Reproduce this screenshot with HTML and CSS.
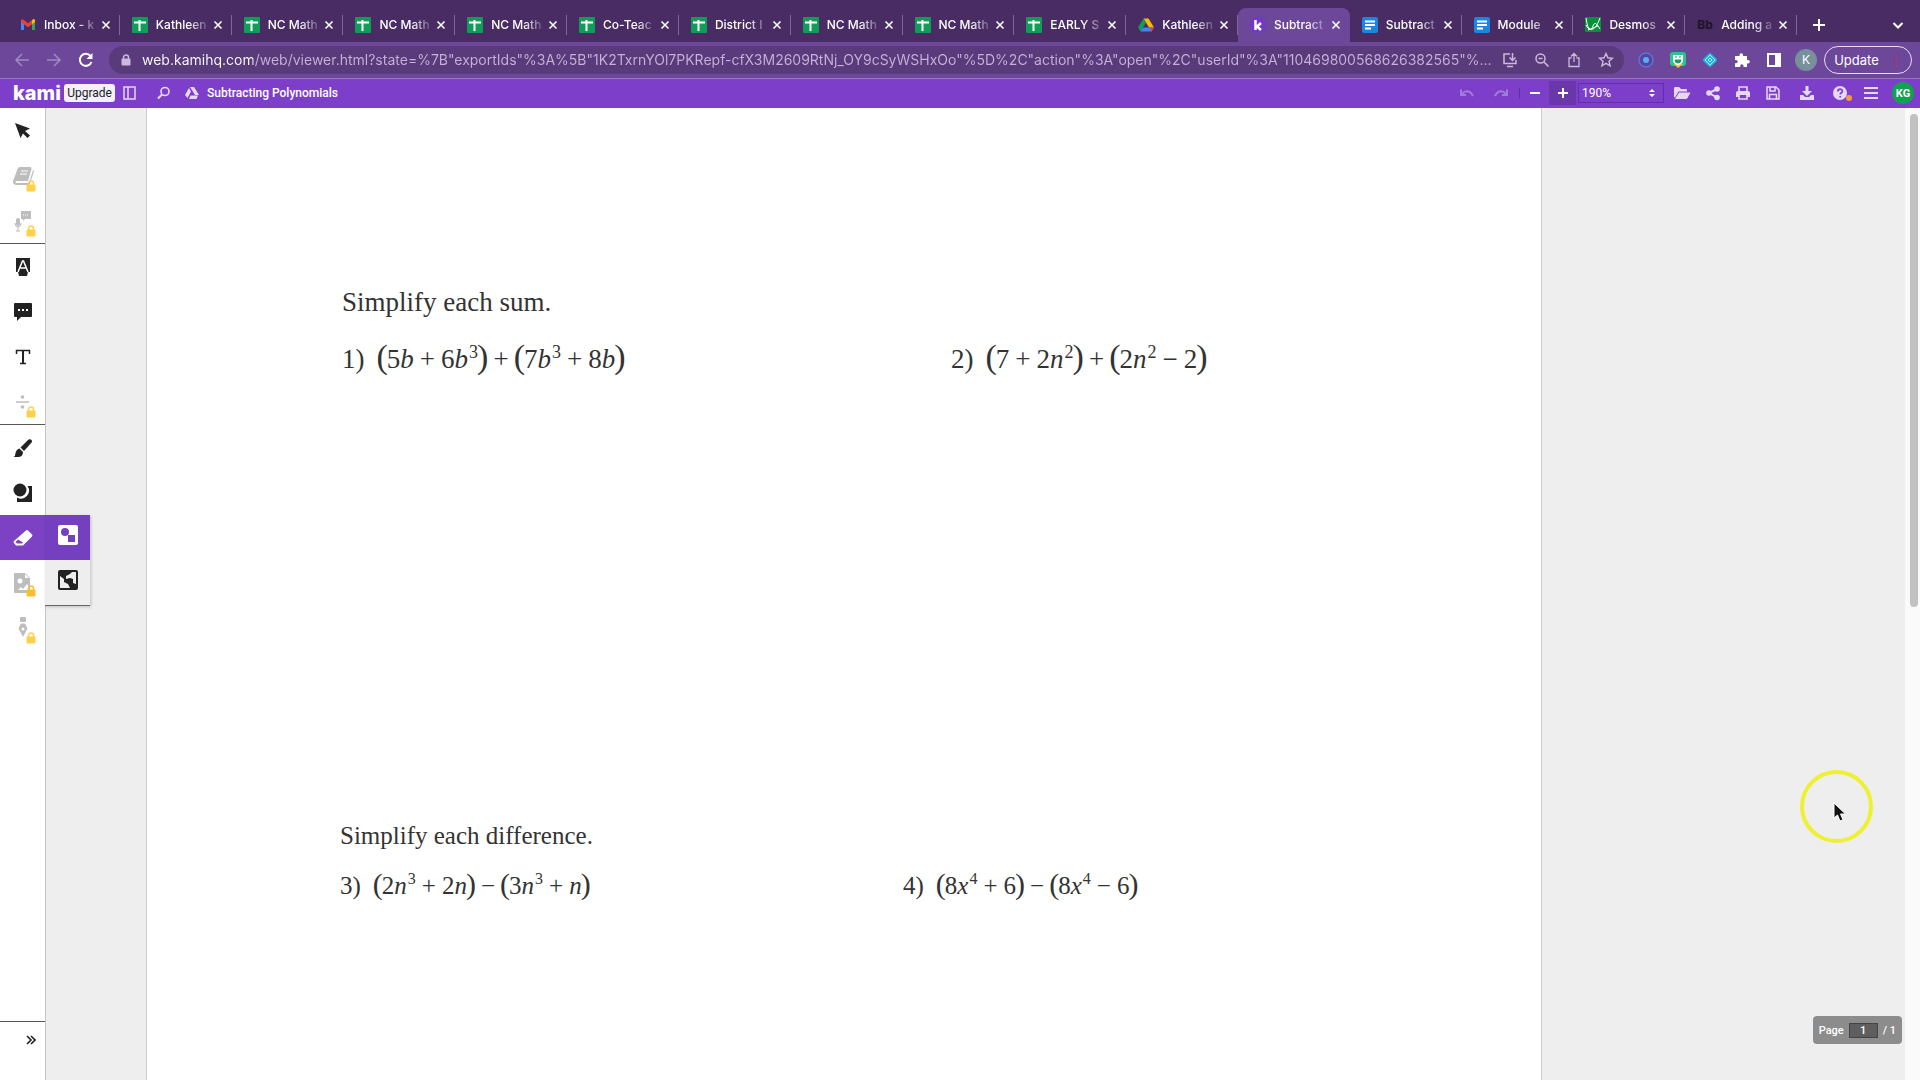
FILE: index.html
```html
<!DOCTYPE html>
<html lang="en">
<head>
    <meta charset="UTF-8">
    <meta name="viewport" content="width=device-width, initial-scale=1.0">
    <title>Subtracting Polynomials</title>
    <link rel="stylesheet" href="styles.css">
</head>
<body>
    <svg class="defs" aria-hidden="true">
        <symbol id="sheets" viewBox="0 0 16 16"><rect width="16" height="16" rx="1" fill="#0f9d58"/><path d="M2 5.500h12M7.500 3v11" stroke="#fff" stroke-width="2"/></symbol>
        <symbol id="docs" viewBox="0 0 16 16"><rect width="16" height="16" rx="2" fill="#1a86e0"/><path d="M3 4.500h10M3 8h10M3 11.500h6" stroke="#fff" stroke-width="2"/></symbol>
        <symbol id="close" viewBox="0 0 10 10"><path d="M1.500 1.500l7 7M8.500 1.500l-7 7" stroke="#fff" stroke-width="1.600"/></symbol>
        <symbol id="lock" viewBox="0 0 10 12"><path d="M2.500 6V3.500a2.500 2.500 0 0 1 5 0V6" fill="none" stroke="currentColor" stroke-width="1.500"/><rect x="0.500" y="4.500" width="9" height="7" rx="1" fill="currentColor"/></symbol>
    </svg>

    <!-- Browser tabs -->
    <div class="tab-strip">
        <div class="tabs">
            <div class="tab"><svg class="favicon" viewBox="0 0 16 16"><path d="M1 13V4l3 2.300V13z" fill="#4285f4"/><path d="M12 13V6.300L15 4v9z" fill="#34a853"/><path d="M1 5V3.500C1 2 2.500 2 3.500 2.800L8 6.200l4.500-3.400C13.500 2 15 2 15 3.500V5L8 10.300z" fill="#ea4335"/><path d="M12 3.200l.8-.6C13.800 2 15 2.400 15 3.500V5l-3 2.300z" fill="#fbbc04"/></svg><a class="tab-title" href="#">Inbox - k</a><button class="tab-close" aria-label="Close"><svg><use href="#close"/></svg></button></div>
            <div class="tab"><svg class="favicon"><use href="#sheets"/></svg><a class="tab-title" href="#">Kathleen</a><button class="tab-close" aria-label="Close"><svg><use href="#close"/></svg></button></div>
            <div class="tab"><svg class="favicon"><use href="#sheets"/></svg><a class="tab-title" href="#">NC Math</a><button class="tab-close" aria-label="Close"><svg><use href="#close"/></svg></button></div>
            <div class="tab"><svg class="favicon"><use href="#sheets"/></svg><a class="tab-title" href="#">NC Math</a><button class="tab-close" aria-label="Close"><svg><use href="#close"/></svg></button></div>
            <div class="tab"><svg class="favicon"><use href="#sheets"/></svg><a class="tab-title" href="#">NC Math</a><button class="tab-close" aria-label="Close"><svg><use href="#close"/></svg></button></div>
            <div class="tab"><svg class="favicon"><use href="#sheets"/></svg><a class="tab-title" href="#">Co-Teac</a><button class="tab-close" aria-label="Close"><svg><use href="#close"/></svg></button></div>
            <div class="tab"><svg class="favicon"><use href="#sheets"/></svg><a class="tab-title" href="#">District I</a><button class="tab-close" aria-label="Close"><svg><use href="#close"/></svg></button></div>
            <div class="tab"><svg class="favicon"><use href="#sheets"/></svg><a class="tab-title" href="#">NC Math</a><button class="tab-close" aria-label="Close"><svg><use href="#close"/></svg></button></div>
            <div class="tab"><svg class="favicon"><use href="#sheets"/></svg><a class="tab-title" href="#">NC Math</a><button class="tab-close" aria-label="Close"><svg><use href="#close"/></svg></button></div>
            <div class="tab"><svg class="favicon"><use href="#sheets"/></svg><a class="tab-title" href="#">EARLY S</a><button class="tab-close" aria-label="Close"><svg><use href="#close"/></svg></button></div>
            <div class="tab"><svg class="favicon" viewBox="0 0 16 16"><path d="M5.500 1.500h5L16 10.500h-5z" fill="#fbbc04"/><path d="M5.500 1.500L0 10.500l2.500 4L8 5.500z" fill="#0f9d58"/><path d="M5 10.500h11l-2.500 4h-11z" fill="#4285f4"/><path d="M11.500 10.500H16l-2.500 4z" fill="#ea4335"/></svg><a class="tab-title" href="#">Kathleen</a><button class="tab-close" aria-label="Close"><svg><use href="#close"/></svg></button></div>
            <div class="tab active"><svg class="favicon" viewBox="0 0 16 16"><circle cx="8" cy="8" r="8" fill="#7238c8"/><path d="M5.500 3v10M11 6L7 9.500l4 3.500" stroke="#fff" stroke-width="2.500" fill="none"/></svg><a class="tab-title" href="#">Subtract</a><button class="tab-close" aria-label="Close"><svg><use href="#close"/></svg></button></div>
            <div class="tab"><svg class="favicon"><use href="#docs"/></svg><a class="tab-title" href="#">Subtract</a><button class="tab-close" aria-label="Close"><svg><use href="#close"/></svg></button></div>
            <div class="tab"><svg class="favicon"><use href="#docs"/></svg><a class="tab-title" href="#">Module</a><button class="tab-close" aria-label="Close"><svg><use href="#close"/></svg></button></div>
            <div class="tab"><svg class="favicon" viewBox="0 0 16 16"><rect width="16" height="15" rx="1" fill="#0b8f3a"/><path d="M1 1c2 14 5 13 7 8s4-2 7 3M1 8c3 7 9 7 14-7M3 13L13 9" stroke="#fff" fill="none"/></svg><a class="tab-title" href="#">Desmos</a><button class="tab-close" aria-label="Close"><svg><use href="#close"/></svg></button></div>
            <div class="tab"><span class="favicon bb">Bb</span><a class="tab-title" href="#">Adding a</a><button class="tab-close" aria-label="Close"><svg><use href="#close"/></svg></button></div>
        </div>
        <div class="tab-actions">
            <button aria-label="New tab"><svg width="12" height="12" viewBox="0 0 12 12"><path d="M6 0v12M0 6h12" stroke="#fff" stroke-width="2"/></svg></button>
            <button aria-label="Search tabs"><svg width="12" height="12" viewBox="0 0 12 12"><path d="M1.500 4L6 8.500 10.500 4" fill="none" stroke="#fff" stroke-width="2"/></svg></button>
        </div>
    </div>

    <!-- Address bar -->
    <div class="address-row">
        <div class="nav-buttons">
            <button class="dim" aria-label="Back"><svg width="16" height="16" viewBox="0 0 16 16"><path d="M15 8H2M8 2L2 8l6 6" fill="none" stroke="currentColor" stroke-width="1.500"/></svg></button>
            <button class="dim" aria-label="Forward"><svg width="16" height="16" viewBox="0 0 16 16"><path d="M1 8h13M8 2l6 6-6 6" fill="none" stroke="currentColor" stroke-width="1.500"/></svg></button>
            <button aria-label="Reload"><svg width="16" height="16" viewBox="0 0 16 16"><path d="M13.500 10A6 6 0 1 1 12.500 4" fill="none" stroke="currentColor" stroke-width="2"/><path d="M14.500 1v6h-6z" fill="currentColor"/></svg></button>
        </div>
        <div class="address">
            <svg class="secure" width="10" height="12"><use href="#lock"/></svg>
            <input class="url" type="text" aria-label="Address" value="web.kamihq.com/web/viewer.html?state=%7B&quot;exportIds&quot;%3A%5B&quot;1K2TxrnYOl7PKRepf-cfX3M2609RtNj_OY9cSyWSHxOo&quot;%5D%2C&quot;action&quot;%3A&quot;open&quot;%2C&quot;userId&quot;%3A&quot;110469800568626382565&quot;%...">
            <div class="address-icons">
                <button aria-label="Install"><svg width="16" height="16" viewBox="0 0 16 16"><path d="M8 2H2v9.500h12V8M5 14.500h6M10.500 1v7M7.500 5.500l3 3 3-3" fill="none" stroke="currentColor" stroke-width="1.500"/></svg></button>
                <button aria-label="Zoom out"><svg width="16" height="16" viewBox="0 0 16 16"><circle cx="6.500" cy="6.500" r="4.500" fill="none" stroke="currentColor" stroke-width="1.500"/><path d="M10 10l4.500 4.500M4.500 6.500h4" stroke="currentColor" stroke-width="1.500"/></svg></button>
                <button aria-label="Share"><svg width="16" height="16" viewBox="0 0 16 16"><path d="M5.500 6H3v8.500h10V6h-2.500M8 10V1.500M5 4.500l3-3 3 3" fill="none" stroke="currentColor" stroke-width="1.300"/></svg></button>
                <button aria-label="Bookmark"><svg width="16" height="16" viewBox="0 0 16 16"><path d="M8 1.500l1.900 4.300 4.600.4-3.500 3 1.100 4.600L8 11.400l-4.100 2.400L5 9.200l-3.500-3 4.600-.4z" fill="none" stroke="currentColor" stroke-width="1.400"/></svg></button>
            </div>
        </div>
        <div class="extensions">
            <button aria-label="Recorder"><svg width="16" height="16" viewBox="0 0 16 16"><circle cx="8" cy="8" r="7" fill="#5942a3" stroke="#5c74cf" stroke-width="1.500"/><circle cx="8" cy="8" r="3" fill="#5aaef5"/></svg></button>
            <button aria-label="Bitmoji"><svg width="16" height="16" viewBox="0 0 16 16"><rect width="16" height="14" rx="3" fill="#2bc48a"/><path d="M4 12h9l-5 4z" fill="#f4c542"/><path d="M3 3h10v5a5 5 0 0 1-10 0z" fill="#fff"/><path d="M5 5h2M9 5h2M5 8h6a3 3 0 0 1-6 0z" stroke="#189b69" fill="#189b69"/></svg></button>
            <button aria-label="Diamond"><svg width="16" height="16" viewBox="0 0 16 16"><rect x="2.500" y="2.500" width="11" height="11" rx="2" transform="rotate(45 8 8)" fill="#23b5e8"/><path d="M8 3l5 5-5 5-5-5zM8 6l2 2-2 2-2-2z" fill="none" stroke="#a4e8fa"/></svg></button>
            <button aria-label="Extensions"><svg width="16" height="16" viewBox="0 0 16 16"><path d="M1 4h4.500V3a1.800 1.800 0 0 1 3.600 0v1H13v4h1a1.800 1.800 0 0 1 0 3.600h-1V15H9.500v-1.200a1.600 1.600 0 0 0-3.200 0V15H1v-3.700h1a1.700 1.700 0 0 0 0-3.400H1z" fill="#fff"/></svg></button>
            <button aria-label="Side panel"><svg width="16" height="16" viewBox="0 0 16 16"><path d="M1 1h14v14H1zM3 3v10h6V3z" fill="#fff" fill-rule="evenodd"/></svg></button>
            <button class="profile">K</button>
            <button class="update">Update <span class="dots">⋮</span></button>
        </div>
    </div>

    <!-- Kami toolbar -->
    <header class="kami-bar">
        <a class="logo" href="#">kami</a>
        <button class="upgrade">Upgrade</button>
        <button class="panel-toggle" aria-label="Panel"><svg width="14" height="14" viewBox="0 0 14 14"><path d="M1 1h11v12H1zM5 1v12" fill="none" stroke="currentColor" stroke-width="1.500"/></svg></button>
        <button class="search" aria-label="Search"><svg width="14" height="14" viewBox="0 0 14 14"><circle cx="8" cy="5.500" r="4" fill="none" stroke="currentColor" stroke-width="1.600"/><path d="M5 8.500L1 12.500" stroke="currentColor" stroke-width="2"/></svg></button>
        <svg class="drive" width="14" height="12" viewBox="0 0 14 12"><path d="M5 0h4l5 8h-4zM4 1l2 3.500L2.500 11 0 8zM5.500 8.500H13L11.500 12H4z" fill="currentColor"/></svg>
        <h1 class="doc-title">Subtracting Polynomials</h1>
        <div class="kami-tools">
            <div class="history">
                <button aria-label="Undo"><svg width="16" height="10" viewBox="0 0 16 10"><path d="M3 6c3-4 8-4 11 2M2 1.500V7h5" fill="none" stroke="currentColor" stroke-width="2"/></svg></button>
                <button aria-label="Redo"><svg width="16" height="10" viewBox="0 0 16 10"><path d="M13 6C10 2 5 2 2 8M14 1.500V7H9" fill="none" stroke="currentColor" stroke-width="2"/></svg></button>
            </div>
            <button class="zoom-out" aria-label="Zoom out"><svg width="10" height="10" viewBox="0 0 10 10"><path d="M0 5h10" stroke="#fff" stroke-width="2"/></svg></button>
            <button class="zoom-in" aria-label="Zoom in"><svg width="10" height="10" viewBox="0 0 10 10"><path d="M0 5h10M5 0v10" stroke="#fff" stroke-width="2"/></svg></button>
            <div class="zoom-level">
                <select aria-label="Zoom level"><option>190%</option></select>
                <svg width="6" height="8" viewBox="0 0 6 8"><path d="M0 3l3-3 3 3zM0 5l3 3 3-3z" fill="#fff"/></svg>
            </div>
            <div class="file-tools">
                <button aria-label="Open"><svg width="18" height="16" viewBox="0 0 18 16"><path d="M1 12V3q0-1 1-1h4l2 2h5q1 0 1 1v1.500H5.500L2 12.500z" fill="currentColor"/><path d="M6 7.500h11.500L14.500 13q-.5 1-1.500 1H2z" fill="currentColor"/></svg></button>
                <button aria-label="Share"><svg width="16" height="16" viewBox="0 0 16 16"><path d="M12 4L4 8l8 4.500" fill="none" stroke="currentColor" stroke-width="2"/><g fill="currentColor"><circle cx="12" cy="4" r="2.800"/><circle cx="4" cy="8" r="2.800"/><circle cx="12" cy="12.500" r="2.800"/></g></svg></button>
                <button aria-label="Print"><svg width="16" height="16" viewBox="0 0 16 16"><path d="M4 7V2h8v5M4 10v4h8v-4" fill="none" stroke="currentColor" stroke-width="1.600"/><path d="M1 12V8q0-2 2-2h10q2 0 2 2v4h-3v-2H4v2z" fill="currentColor"/></svg></button>
                <button aria-label="Save"><svg width="16" height="16" viewBox="0 0 16 16"><path d="M2 2h9l3 3v9H2zM5 2v4h5V2M4.500 14V9.500h7V14" fill="none" stroke="currentColor" stroke-width="1.500"/></svg></button>
                <button class="download" aria-label="Download"><svg width="16" height="16" viewBox="0 0 16 16"><path d="M6.500 1h3v5H13l-5 5-5-5h3.500z" fill="currentColor"/><path d="M1 10h3l2 2h4l2-2h3v5H1z" fill="currentColor"/></svg></button>
                <button class="help" aria-label="Help"><svg width="20" height="16" viewBox="0 0 20 16"><circle cx="7" cy="8" r="7" fill="currentColor"/><path d="M4.800 6.500c0-3.200 4.600-3.200 4.600-.3 0 1.600-2.200 1.600-2.200 3.300M7.200 11v1.600" fill="none" stroke="#7d3fc9" stroke-width="1.700"/><circle cx="16" cy="13" r="3" fill="#f79a3e"/></svg></button>
                <button aria-label="Menu"><svg width="14" height="14" viewBox="0 0 14 14"><path d="M0 2h14M0 7h14M0 12h14" stroke="currentColor" stroke-width="2"/></svg></button>
            </div>
            <button class="avatar">KG</button>
        </div>
    </header>

    <main class="workspace">
        <nav class="sidebar">
            <div class="tool-group">
                <button class="tool" aria-label="Select"><svg width="16" height="16" viewBox="0 0 16 16"><path d="M0 0l15 5.500-5 2.500 5 4.500-2.500 2.500L8 10.500 5.500 15z" fill="currentColor"/></svg></button>
                <button class="tool locked" aria-label="Dictionary"><svg width="22" height="22" viewBox="0 0 22 22"><path d="M8 2h10q2 0 1.500 2l-3.500 12H5q-2 0-1.500 2H17l4-13 1 1-4.500 14H4q-3.500-.5-3-4L5.500 4Q6 2 8 2z" fill="currentColor"/><path d="M9 6h7M8 9h7" stroke="#fff"/></svg><svg class="badge"><use href="#lock"/></svg></button>
                <button class="tool locked" aria-label="Speech to text"><svg width="22" height="22" viewBox="0 0 22 22"><path d="M9 1h10v8h-6l-2 2V9H9z" fill="currentColor"/><rect x="4" y="8" width="4" height="8" rx="2" fill="currentColor"/><path d="M3 13q0 4 3 4t3-4M6 17v4M4 21h4" fill="none" stroke="currentColor"/><path d="M11 5h6" stroke="#fff" stroke-dasharray="1 1"/></svg><svg class="badge"><use href="#lock"/></svg></button>
            </div>
            <div class="tool-group">
                <button class="tool" aria-label="Markup"><svg width="16" height="18" viewBox="0 0 16 18"><path d="M1 0h14v14h-2l-1 4H4l-1-4H1z" fill="currentColor"/><path d="M3 14L7.500 3h1L13 14M5 10h6" fill="none" stroke="#fff" stroke-width="1.500"/></svg></button>
                <button class="tool" aria-label="Comment"><svg width="20" height="20" viewBox="0 0 20 20"><path d="M2 1h16q1 0 1 1v12q0 1-1 1H8l-4 4v-4H2q-1 0-1-1V2q0-1 1-1z" fill="currentColor"/><path d="M5 8h2M9 8h2M13 8h2" stroke="#fff" stroke-width="2"/></svg></button>
                <button class="tool" aria-label="Text box"><svg width="16" height="16" viewBox="0 0 16 16"><path d="M1.500 5V1.500h13V5M5 14.500h6" fill="none" stroke="currentColor" stroke-width="1.500"/><path d="M8 1.500v13" stroke="currentColor" stroke-width="2"/></svg></button>
                <button class="tool locked" aria-label="Equation"><svg width="16" height="16" viewBox="0 0 16 16"><path d="M1 8h13" stroke="currentColor" stroke-width="1.500"/><circle cx="7.500" cy="3" r="1.800" fill="currentColor"/><circle cx="7.500" cy="13" r="1.800" fill="currentColor"/></svg><svg class="badge"><use href="#lock"/></svg></button>
            </div>
            <div class="tool-group last">
                <button class="tool" aria-label="Drawing"><svg width="20" height="20" viewBox="0 0 20 20"><path d="M15.500 1.500q3.500-1 3.500 2.500L11 13 7.500 9.500z" fill="currentColor"/><path d="M6.500 10.500l3.500 3.500q0 5-5 5H.5q2-1 2-4 1-4 4-4.500z" fill="currentColor"/></svg></button>
                <button class="tool" aria-label="Shapes"><svg width="20" height="20" viewBox="0 0 20 20"><path d="M14.500 3H19v16H4v-4.500a8 8 0 0 0 10.500-11.500z" fill="currentColor"/><circle cx="7" cy="7" r="6.500" fill="currentColor"/></svg></button>
                <button class="tool selected" aria-label="Eraser"><svg width="20" height="18" viewBox="0 0 20 18"><path d="M13 1.500q1-1 2 0l4 4q1 1 0 2L10 16.500H3l-2-2.500q-1-1 0-2zM5 10.500l-2.500 2.500 1.500 1.500h5l1-1z" fill="currentColor" fill-rule="evenodd"/></svg></button>
                <button class="tool locked" aria-label="Insert image"><svg width="20" height="22" viewBox="0 0 20 22"><path d="M1 2q0-1 1-1h10l5 5v15H2q-1 0-1-1z" fill="currentColor"/><circle cx="7" cy="9" r="2.500" fill="#fff"/><path d="M12 2v4h4z" fill="#fff"/><path d="M5 18l3-3 2 2 4-5 2 3v3z" fill="#fff"/></svg><svg class="badge large"><use href="#lock"/></svg></button>
                <button class="tool locked" aria-label="Signature"><svg width="12" height="22" viewBox="0 0 12 22"><rect x="3" y="0" width="6" height="5" rx="1" fill="currentColor"/><path d="M4 6.500h4l2.500 5L6 20l-4.500-8.500z" fill="currentColor"/><circle cx="6" cy="12" r="1.500" fill="#fff"/></svg><svg class="badge"><use href="#lock"/></svg></button>
            </div>
            <button class="expand" aria-label="Expand"><svg width="10" height="10" viewBox="0 0 10 10"><path d="M1 1l4 4-4 4M5 1l4 4-4 4" fill="none" stroke="currentColor" stroke-width="1.600"/></svg></button>
            <div class="submenu">
                <button class="tool selected" aria-label="Erase objects"><svg width="22" height="22" viewBox="0 0 22 22"><rect x="1" y="1" width="20" height="20" rx="2" fill="#fff"/><circle cx="8" cy="8" r="4" fill="#7540bf"/><rect x="11" y="11" width="7" height="7" fill="#7540bf"/></svg></button>
                <button class="tool" aria-label="Erase parts"><svg width="22" height="22" viewBox="0 0 22 22"><rect x="1" y="1" width="20" height="20" rx="2" fill="currentColor"/><path d="M3 7l4 3v3l4 2 2 4H3zM9 7l4-2 2-2h4v12l-3-1v-4l-3-1-4 1z" fill="#eee"/></svg></button>
            </div>
        </nav>

        <section class="viewer">
            <article class="sheet">
                <section class="exercise">
                    <h2>Simplify each sum.</h2>
                    <div class="problems">
                        <p class="problem"><span class="number">1)</span><span class="paren">(</span>5<i>b</i><span class="op">+</span>6<i>b</i><sup>3</sup><span class="paren">)</span><span class="op">+</span><span class="paren">(</span>7<i>b</i><sup>3</sup><span class="op">+</span>8<i>b</i><span class="paren">)</span></p>
                        <p class="problem"><span class="number">2)</span><span class="paren">(</span>7<span class="op">+</span>2<i>n</i><sup>2</sup><span class="paren">)</span><span class="op">+</span><span class="paren">(</span>2<i>n</i><sup>2</sup><span class="op">−</span>2<span class="paren">)</span></p>
                    </div>
                </section>
                <section class="exercise small">
                    <h2>Simplify each difference.</h2>
                    <div class="problems">
                        <p class="problem"><span class="number">3)</span><span class="paren">(</span>2<i>n</i><sup>3</sup><span class="op">+</span>2<i>n</i><span class="paren">)</span><span class="op">−</span><span class="paren">(</span>3<i>n</i><sup>3</sup><span class="op">+</span><i>n</i><span class="paren">)</span></p>
                        <p class="problem"><span class="number">4)</span><span class="paren">(</span>8<i>x</i><sup>4</sup><span class="op">+</span>6<span class="paren">)</span><span class="op">−</span><span class="paren">(</span>8<i>x</i><sup>4</sup><span class="op">−</span>6<span class="paren">)</span></p>
                    </div>
                </section>
            </article>
            <div class="page-box">
                <label for="page">Page</label>
                <input id="page" type="text" value="1">
                <span>/ 1</span>
            </div>
            <div class="pointer"><svg width="14" height="20" viewBox="0 0 14 20"><path d="M1 1v15l3.500-3 2.500 6 3-1.300-2.500-5.700H12.500z" fill="#111" stroke="#fff"/></svg></div>
        </section>
        <div class="scrollbar"><div class="thumb"></div></div>
    </main>
</body>
</html>
```

FILE: styles.css
```css
* {
    box-sizing: border-box;
}
body {
    margin: 0;
    height: 100vh;
    display: flex;
    flex-direction: column;
    overflow: hidden;
    font-family: Inter, "Liberation Sans", sans-serif;
    font-size: 12px;
    color: #222;
}
button {
    display: flex;
    align-items: center;
    justify-content: center;
    padding: 0;
    border: none;
    background: none;
    color: inherit;
    font: inherit;
    cursor: pointer;
}
a {
    color: inherit;
    text-decoration: none;
}
svg {
    flex: none;
}
.defs {
    position: absolute;
    width: 0;
    height: 0;
}

/* tabs */
.tab-strip {
    display: flex;
    height: 42px;
    padding: 8px 0 0 8px;
    background-color: #482c63;
    color: #fff;
}
.tabs {
    flex: 1;
    min-width: 0;
    display: flex;
}
.tab {
    flex: 1;
    min-width: 0;
    display: flex;
    align-items: center;
    padding: 0 9px 0 12px;
    background: linear-gradient(#80669a, #80669a) right center / 1px 20px no-repeat;
}
.tab.active {
    background: #6d4799;
    border-radius: 8px 8px 0 0;
}
.favicon {
    width: 16px;
    height: 16px;
    flex: none;
}
.bb {
    color: #1d1526;
    font-size: 12px;
    font-weight: 700;
    line-height: 16px;
}
.tab-title {
    flex: 1;
    min-width: 0;
    margin-left: 8px;
    overflow: hidden;
    white-space: nowrap;
    font-weight: 500;
    line-height: 18px;
    -webkit-mask-image: linear-gradient(90deg, #000 60%, transparent);
    mask-image: linear-gradient(90deg, #000 60%, transparent);
}
.tab-close {
    margin-left: 2px;
}
.tab-close svg {
    width: 10px;
    height: 10px;
}
.tab-actions {
    flex: none;
    width: 123px;
    display: flex;
    justify-content: space-between;
    padding: 0 16px;
}

/* address bar */
.address-row {
    display: flex;
    align-items: center;
    height: 37px;
    padding: 0 6px 1px 0;
    background-color: #6d4799;
    border-bottom: 1px solid #9673c4;
    color: #fff;
}
.nav-buttons {
    display: flex;
    gap: 16px;
    padding: 0 14px;
    width: 109px;
}
.dim {
    color: #a389c0;
}
.address {
    flex: 1;
    display: flex;
    align-items: center;
    height: 28px;
    padding: 0 10px 0 12px;
    border-radius: 14px;
    background-color: #593a7b;
    color: #cbbadb;
}
.url {
    flex: 1;
    min-width: 0;
    margin-left: 11px;
    padding: 0;
    border: none;
    outline: none;
    font: 14px Inter, sans-serif;
    color: transparent;
    background: linear-gradient(90deg, #fff 111px, #c5b2d8 111px);
    -webkit-background-clip: text;
    background-clip: text;
}
.address-icons {
    display: flex;
    gap: 16px;
}
.extensions {
    display: flex;
    align-items: center;
    gap: 16px;
    margin-left: 14px;
}
.profile {
    width: 22px;
    height: 22px;
    margin: 0 -3px;
    border-radius: 50%;
    background-color: #78909c;
}
.update {
    width: 88px;
    height: 28px;
    margin: 0 2px 0 -6px;
    border: 1px solid #e8dcf5;
    border-radius: 14px;
    font-size: 13px;
    gap: 10px;
}
.dots {
    color: #a33a68;
    font-weight: 700;
}

/* kami toolbar */
.kami-bar {
    display: flex;
    align-items: center;
    height: 29px;
    padding: 0 6px 1px 13px;
    background-color: #7d3fc9;
    color: #e6d9f7;
    font-family: Roboto, sans-serif;
}
.logo {
    width: 51px;
    color: #fff;
    font: 800 20px/24px Inter, sans-serif;
}
.upgrade {
    width: 51px;
    height: 18px;
    border-radius: 3px;
    background-color: #f4effa;
    color: #222;
}
.panel-toggle {
    margin-left: 8px;
}
.search {
    margin-left: 20px;
}
.drive {
    margin-left: 14px;
}
.doc-title {
    margin: 0 0 0 8px;
    color: #fff;
    font-size: 12px;
    font-weight: 500;
}
.kami-tools {
    flex: 1;
    display: flex;
    align-items: center;
    justify-content: flex-end;
    height: 28px;
}
.history {
    display: flex;
    gap: 18px;
    padding-right: 10px;
    border-right: 1px solid #5f2fa0;
    color: #a37bdb;
}
.zoom-out {
    width: 29px;
    height: 24px;
}
.zoom-in {
    width: 27px;
    height: 24px;
    background-color: #6a37ab;
}
.zoom-level {
    display: flex;
    align-items: center;
    width: 86px;
    height: 20px;
    margin-left: 2px;
    padding-right: 8px;
    border: 1px solid #6230a5;
}
.zoom-level select {
    flex: 1;
    appearance: none;
    border: none;
    padding: 0 3px;
    background: none;
    color: #fff;
    font: 12px Roboto, sans-serif;
}
.file-tools {
    display: flex;
    align-items: center;
    gap: 14px;
    margin: 0 14px 0 9px;
}
.download {
    margin: 0 4px;
}
.help {
    margin-right: -3px;
}
.avatar {
    width: 22px;
    height: 22px;
    border-radius: 50%;
    background-color: #12a150;
    color: #fff;
    font-size: 11px;
    font-weight: 700;
}

/* workspace */
.workspace {
    flex: 1;
    display: flex;
    min-height: 0;
}
.sidebar {
    position: relative;
    display: flex;
    flex-direction: column;
    width: 46px;
    border-right: 1px solid #c4c4c4;
    background-color: #fff;
}
.tool-group {
    border-bottom: 1px solid #555;
}
.tool-group.last {
    flex: 1;
}
.tool {
    position: relative;
    width: 45px;
    height: 45px;
}
.locked {
    color: #bdbdbd;
}
.badge {
    position: absolute;
    right: 9px;
    bottom: 6px;
    width: 10px;
    height: 12px;
    color: #ffd04a;
}
.badge.large {
    height: 16px;
    color: #fbbf2d;
}
.selected {
    background-color: #7d42c4;
    color: #fff;
}
.expand {
    height: 58px;
    padding: 0 9px 22px 0;
    justify-content: flex-end;
}
.submenu {
    position: absolute;
    top: 407px;
    left: 45px;
    border-bottom: 1px solid #666;
    background-color: #eee;
    box-shadow: 1px 1px 3px rgba(0, 0, 0, 0.2);
    z-index: 1;
}
.submenu .tool {
    padding-bottom: 6px;
}
.submenu .selected {
    background-color: #7540bf;
}
.viewer {
    position: relative;
    flex: 1;
    display: flex;
    overflow: hidden;
    background-color: #eee;
}
.sheet {
    flex: 1;
    margin: 0 363px 0 100px;
    padding: 178px 0 0 195px;
    border: solid #ccc;
    border-width: 0 1px;
    background-color: #fff;
    font-family: "Liberation Serif", serif;
    color: #333;
}
.exercise {
    height: 534px;
    font-size: 27px;
}
.exercise.small {
    height: auto;
    margin-left: -2px;
    font-size: 25px;
}
.exercise h2 {
    margin: 0 0 17px;
    font-size: inherit;
    font-weight: 400;
    line-height: 32px;
}
.exercise.small h2 {
    margin-bottom: 10px;
}
.problems {
    display: grid;
    grid-template-columns: 609px 1fr;
}
.small .problems {
    grid-template-columns: 563px 1fr;
}
.problem {
    margin: 0;
    line-height: 48px;
    white-space: nowrap;
}
.number {
    margin-right: 13px;
}
.op {
    margin: 0 6px;
}
.paren {
    margin: 0 -1px;
    font-size: 34px;
    line-height: 32px;
}
.small .paren {
    font-size: 30px;
}
.problem sup {
    margin-left: 1px;
    font-size: 18px;
    line-height: 1;
    vertical-align: 10px;
}
.small .problem sup {
    font-size: 16px;
}
.page-box {
    position: absolute;
    right: 3px;
    bottom: 36px;
    display: flex;
    align-items: center;
    gap: 5px;
    height: 28px;
    padding: 0 6px;
    border-radius: 4px;
    background-color: #8c8c8c;
    color: #fff;
    font: 500 11px Roboto, sans-serif;
}
.page-box input {
    width: 29px;
    height: 15px;
    padding: 0;
    border: 1px solid #444;
    background-color: #5e5e5e;
    color: #fff;
    font: inherit;
    text-align: center;
}
.pointer {
    position: absolute;
    right: 32px;
    bottom: 237px;
    display: flex;
    align-items: center;
    justify-content: center;
    width: 73px;
    height: 73px;
    padding: 10px 0 0 6px;
    border: 4px solid #f0f032;
    border-radius: 50%;
}
.scrollbar {
    flex: none;
    width: 15px;
    padding: 6px 2px 0 5px;
    background-color: #fafafa;
}
.thumb {
    height: 51%;
    border-radius: 4px;
    background-color: #c1c1c1;
}
```
